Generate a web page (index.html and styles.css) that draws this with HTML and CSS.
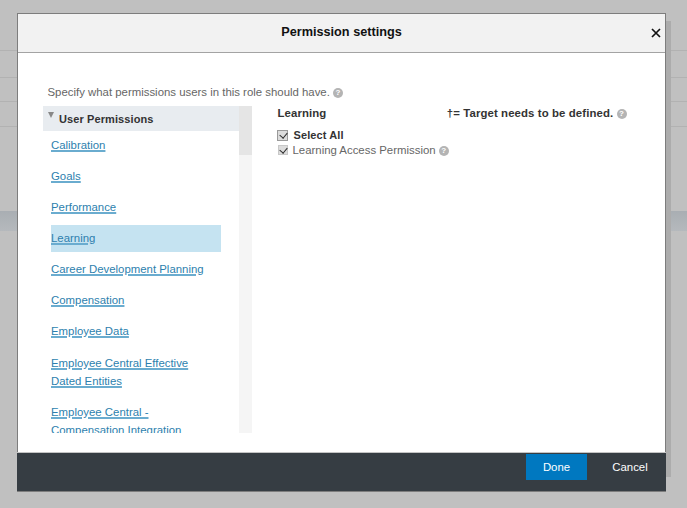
FILE: index.html
```html
<!DOCTYPE html>
<html lang="en">
<head>
<meta charset="utf-8">
<title>Permission settings</title>
<link rel="stylesheet" href="styles.css">
</head>
<body>
<div class="backdrop">
  <div class="bg-row r1"></div>
  <div class="bg-row r2"></div>
  <div class="bg-row r3"></div>
  <div class="bg-row r4"></div>
  <div class="bg-band"></div>
</div>
<div class="shadow"></div>
<div class="modal">
  <header class="modal-head">
    <h1>Permission settings</h1>
    <svg class="close" width="10" height="10" viewBox="0 0 10 10"><path d="M1 1 9 9M9 1 1 9" stroke="#111" stroke-width="1.7" fill="none"/></svg>
  </header>
  <div class="modal-body">
    <p class="intro">Specify what permissions users in this role should have. <span class="help">?</span></p>
    <div class="columns">
      <div class="list-wrap">
        <div class="list">
          <div class="list-head"><span class="tri"></span>User Permissions</div>
          <ul class="items">
            <li><a href="#">Calibration</a></li>
            <li><a href="#">Goals</a></li>
            <li><a href="#">Performance</a></li>
            <li class="selected"><a href="#">Learning</a></li>
            <li><a href="#">Career Development Planning</a></li>
            <li><a href="#">Compensation</a></li>
            <li><a href="#">Employee Data</a></li>
            <li class="tall"><a href="#">Employee Central Effective<br>Dated Entities</a></li>
            <li><a href="#">Employee Central -<br>Compensation Integration</a></li>
          </ul>
        </div>
        <div class="scrollbar"><div class="thumb"></div></div>
      </div>
      <div class="detail">
        <div class="detail-head">
          <span class="detail-title">Learning</span>
          <span class="target">†= Target needs to be defined. <span class="help">?</span></span>
        </div>
        <label class="check all"><input type="checkbox" checked><span>Select All</span></label>
        <label class="check"><input type="checkbox" checked><span>Learning Access Permission <span class="help">?</span></span></label>
      </div>
    </div>
  </div>
  <footer class="modal-foot">
    <button class="btn primary">Done</button>
    <button class="btn secondary">Cancel</button>
  </footer>
</div>
</body>
</html>
```
FILE: styles.css
```css
* { box-sizing: border-box; }
html, body { margin: 0; height: 100%; }
body {
  position: relative;
  width: 687px;
  height: 508px;
  overflow: hidden;
  background: #c0c0c0;
  font-family: "Liberation Sans", Arial, sans-serif;
}
.bg-row { border-bottom: 1px solid #b2b2b2; }
.r1 { height: 51px; }
.r2 { height: 27px; }
.r3 { height: 24px; }
.r4 { height: 25px; }
.bg-band {
  height: 20px;
  margin-top: 84px;
  background: linear-gradient(#a9aeb3, #b5b9bd);
}
.shadow {
  position: absolute;
  left: 25px;
  top: 21px;
  width: 646px;
  height: 456px;
  background: #acacac;
}
.modal {
  position: absolute;
  left: 17px;
  top: 13px;
  width: 649px;
  height: 479px;
  display: flex;
  flex-direction: column;
  background: #fff;
  border: 1px solid #7d7d7d;
  border-left-width: 1.5px;
}
.modal-head {
  height: 39px;
  flex: none;
  display: flex;
  align-items: center;
  justify-content: center;
  position: relative;
  background: #f2f2f2;
  border-bottom: 1px solid #a3a3a3;
}
.modal-head h1 {
  margin: 0 0 2px;
  font-size: 12.7px;
  font-weight: bold;
  color: #111;
}
.close { position: absolute; right: 4px; top: 14px; }
.modal-body {
  flex: 1;
  min-height: 0;
  padding: 32px 0 0 24.5px;
  overflow: hidden;
}
.intro {
  margin: 0 0 7px 5px;
  height: 14px;
  font-size: 11.4px;
  line-height: 14px;
  color: #666;
}
.help {
  display: inline-block;
  width: 10px;
  height: 10px;
  border-radius: 50%;
  background: #b4b4b4;
  color: #fff;
  font-size: 8px;
  line-height: 10px;
  font-weight: bold;
  text-align: center;
  vertical-align: 1px;
  letter-spacing: 0;
}
.columns { display: flex; align-items: flex-start; }
.list-wrap {
  display: flex;
  width: 209px;
  height: 327px;
  flex: none;
}
.list { width: 196px; height: 327px; overflow: hidden; }
.list-head {
  height: 25px;
  display: flex;
  align-items: center;
  padding: 0 0 0 5px;
  background: #e8ecf0;
  font-size: 11px;
  font-weight: bold;
  color: #333;
  letter-spacing: 0.1px;
}
.tri {
  width: 0;
  height: 0;
  margin: 0 5.5px 7px 0;
  border-left: 3.5px solid transparent;
  border-right: 3.5px solid transparent;
  border-top: 6px solid #888;
}
.items {
  list-style: none;
  margin: 1px 0 0;
  padding: 0;
}
.items li {
  width: 170px;
  margin: 0 0 4px 8.5px;
  padding: 4px 0 5px;
  font-size: 11.4px;
  line-height: 18px;
}
.items li.tall { padding-top: 5px; }
.items li.selected { background: #c5e3f1; }
.items a {
  color: #2d7fae;
  text-decoration-color: #6aaccf;
  text-decoration-thickness: 1.5px;
  text-underline-offset: 1px;
}
.scrollbar { width: 13px; background: #f5f5f5; }
.thumb { height: 49px; background: #e5e5e5; }
.detail { width: 375px; padding-left: 26px; }
.detail-head {
  display: flex;
  justify-content: space-between;
  height: 14px;
  font-size: 11.4px;
  line-height: 14px;
  font-weight: bold;
  color: #333;
  letter-spacing: 0.1px;
}
.check {
  display: flex;
  align-items: center;
  gap: 5px;
  height: 14px;
  font-size: 11.4px;
  color: #666;
}
.check input {
  appearance: none;
  position: relative;
  width: 10px;
  height: 10px;
  margin: 0;
  background: #dcdcdc;
  border: 1px solid #c8c8c8;
  flex: none;
}
.check input::after {
  content: "";
  position: absolute;
  left: 2px;
  top: 0;
  width: 4px;
  height: 6px;
  border-right: 1.5px solid #2b2b2b;
  border-bottom: 1.5px solid #2b2b2b;
  transform: rotate(40deg);
}
.check.all { margin-top: 8px; margin-bottom: 1px; font-size: 11px; font-weight: bold; color: #333; letter-spacing: 0.1px; gap: 6px; }
.check.all input {
  width: 11px;
  height: 11px;
  margin: 0 0 0 -1px;
  border-color: #9a9a9a;
}
.check.all input::after { left: 3px; top: 0; }
.modal-foot {
  height: 39px;
  flex: none;
  display: flex;
  justify-content: flex-end;
  align-items: flex-start;
  padding: 1px 0 0;
  background: #363d43;
  border-top: 1px solid #c4c4c4;
  margin: 0 -1px 0 -1.5px;
}
.btn {
  height: 26px;
  padding: 0;
  border: 0;
  color: #fff;
  font: 11.4px "Liberation Sans", Arial, sans-serif;
}
.btn.primary { width: 61px; background: #0078c0; }
.btn.secondary { width: 79px; padding-left: 7px; background: transparent; }
```
